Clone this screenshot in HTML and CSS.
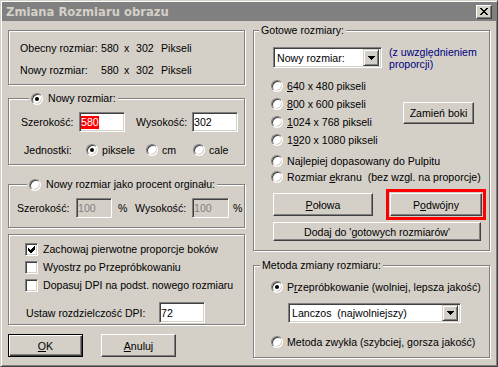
FILE: index.html
```html
<!DOCTYPE html>
<html lang="pl">
<head>
  <meta charset="UTF-8" />
  <meta name="viewport" content="width=device-width, initial-scale=1" />
  <title>Zmiana Rozmiaru obrazu</title>
  <link rel="stylesheet" href="styles.css">
</head>
<body>
  <div class="window">
    <div class="titlebar">
      <span class="title">Zmiana Rozmiaru obrazu</span>
      <button class="close" aria-label="Zamknij">
        <svg width="8" height="7" viewBox="0 0 8 7" shape-rendering="crispEdges"><path d="M0 0h2v1H0zM6 0h2v1H6zM1 1h2v1H1zM5 1h2v1H5zM2 2h4v1H2zM3 3h2v1H3zM2 4h4v1H2zM1 5h2v1H1zM5 5h2v1H5zM0 6h2v1H0zM6 6h2v1H6z" fill="#000"/></svg>
      </button>
    </div>

    <div class="dialog">
      <!-- left column -->
      <div class="col">
        <fieldset class="group info">
          <div class="info-grid">
            <span>Obecny rozmiar:</span><span>580</span><span>x</span><span>302</span><span>Pikseli</span>
            <span>Nowy rozmiar:</span><span>580</span><span>x</span><span>302</span><span>Pikseli</span>
          </div>
        </fieldset>

        <fieldset class="group new-size">
          <legend class="legend-new"><span class="radio checked"></span>Nowy rozmiar:</legend>
          <div class="row">
            <span class="lbl w58">Szerokość:</span>
            <span class="field w46"><span class="sel">580</span></span>
            <span class="lbl w56 ml11">Wysokość:</span>
            <span class="field w46">302</span>
          </div>
          <div class="row units">
            <span class="lbl w62">Jednostki:</span>
            <span class="opt w60"><span class="radio checked"></span>piksele</span>
            <span class="opt w47"><span class="radio"></span>cm</span>
            <span class="opt"><span class="radio"></span>cale</span>
          </div>
        </fieldset>

        <fieldset class="group percent">
          <legend class="legend-pct"><span class="radio"></span>Nowy rozmiar jako procent orginału:</legend>
          <div class="row">
            <span class="lbl w59">Szerokość:</span>
            <span class="field disabled w36">100</span>
            <span class="lbl pct">%</span>
            <span class="lbl w57">Wysokość:</span>
            <span class="field disabled w37">100</span>
            <span class="lbl pct2">%</span>
          </div>
        </fieldset>

        <fieldset class="group options">
          <div class="opt crow"><span class="check"><svg width="7" height="7" viewBox="0 0 7 7" shape-rendering="crispEdges"><path d="M0 2v3l2 2h1l4-4V0H6L2 4z" fill="#000"/></svg></span>Zachowaj pierwotne proporcje boków</div>
          <div class="opt crow"><span class="check"></span>Wyostrz po Przepróbkowaniu</div>
          <div class="opt crow"><span class="check"></span>Dopasuj DPI na podst. nowego rozmiaru</div>
          <div class="row dpi">
            <span class="lbl w133">Ustaw rozdzielczość DPI:</span>
            <span class="field w46">72</span>
          </div>
        </fieldset>

        <div class="actions">
          <button class="btn default"><u>O</u>K</button>
          <button class="btn"><u>A</u>nuluj</button>
        </div>
      </div>

      <!-- right column -->
      <div class="col">
        <fieldset class="group presets">
          <legend class="legend-plain">Gotowe rozmiary:</legend>
          <div class="presets-body">
            <div class="combo-row">
              <div class="combo w109">
                <span>Nowy rozmiar:</span>
                <span class="arrow"><svg width="7" height="4" viewBox="0 0 7 4" shape-rendering="crispEdges"><path d="M0 0h7v1H0zM1 1h5v1H1zM2 2h3v1H2zM3 3h1v1H3z" fill="#000"/></svg></span>
              </div>
              <div class="hint">(z uwzględnieniem<br>proporcji)</div>
            </div>

            <div class="size-block">
              <div class="size-list">
                <div class="opt srow"><span class="radio"></span><span><u>6</u>40 x 480 pikseli</span></div>
                <div class="opt srow"><span class="radio"></span><span><u>8</u>00 x 600 pikseli</span></div>
                <div class="opt srow"><span class="radio"></span><span><u>1</u>024 x 768 pikseli</span></div>
                <div class="opt srow"><span class="radio"></span><span>1<u>9</u>20 x 1080 pikseli</span></div>
              </div>
              <button class="btn swap">Zamień boki</button>
            </div>

            <div class="fit-list">
              <div class="opt frow"><span class="radio"></span>Najlepiej dopasowany do Pulpitu</div>
              <div class="opt frow"><span class="radio"></span><span>Rozmiar <u>e</u>kranu&nbsp; (bez wzgl. na proporcje)</span></div>
            </div>

            <div class="half-row">
              <button class="btn half"><u>P</u>ołowa</button>
              <button class="btn double marked">P<u>o</u>dwójny</button>
            </div>
            <button class="btn add">Dodaj do 'gotowych rozmiarów'</button>
          </div>
        </fieldset>

        <fieldset class="group method">
          <legend class="legend-plain method-legend">Metoda zmiany rozmiaru:</legend>
          <div class="method-body">
            <div class="opt frow"><span class="radio checked"></span><span>P<u>r</u>zepróbkowanie (wolniej, lepsza jakość)</span></div>
            <div class="combo w173 filter">
              <span>Lanczos&nbsp; (najwolniejszy)</span>
              <span class="arrow"><svg width="7" height="4" viewBox="0 0 7 4" shape-rendering="crispEdges"><path d="M0 0h7v1H0zM1 1h5v1H1zM2 2h3v1H2zM3 3h1v1H3z" fill="#000"/></svg></span>
            </div>
            <div class="opt frow plain"><span class="radio"></span>Metoda zwykła (szybciej, gorsza jakość)</div>
          </div>
        </fieldset>
      </div>
    </div>
  </div>
</body>
</html>
```

FILE: styles.css
```css
body {
  margin: 0;
  background: #d4d0c8;
  font-family: "Liberation Sans", Arial, sans-serif;
  font-size: 10.6px;
  color: #000;
}
button {
  font: inherit;
  color: #000;
  padding: 0;
  cursor: default;
}

/* window frame */
.window {
  width: 498px;
  height: 367px;
  box-sizing: border-box;
  padding: 1px;
  border: 1px solid;
  border-color: #d4d0c8 #404040 #404040 #d4d0c8;
  box-shadow: inset 1px 1px #fff, inset -1px -1px #808080;
  background: #d4d0c8;
}
.titlebar {
  height: 19px;
  background: #808080;
  display: flex;
  align-items: center;
  padding-left: 4px;
}
.title {
  font-family: "DejaVu Sans", Verdana, sans-serif;
  font-weight: bold;
  font-size: 11.6px;
  color: #d4d0c8;
}
.close {
  margin-left: auto;
  margin-right: 4px;
  width: 16px;
  height: 14px;
  box-sizing: border-box;
  background: #d4d0c8;
  border: 1px solid;
  border-color: #fff #404040 #404040 #fff;
  box-shadow: inset -1px -1px #808080;
  display: flex;
  align-items: center;
  justify-content: center;
}
.close svg {
  display: block;
}

.dialog {
  display: flex;
  gap: 8px;
  padding-left: 6px;
}
.col {
  width: 237px;
  display: flex;
  flex-direction: column;
}

/* etched group box */
.group {
  margin: 0;
  padding: 0;
  min-width: 0;
  border: 1px solid #808080;
  box-shadow: inset 1px 1px #fff, 1px 1px #fff;
}
.group legend {
  display: flex;
  align-items: center;
  gap: 5px;
  height: 13px;
  line-height: 13px;
  padding: 0 2px;
  background: #d4d0c8;
}
.legend-new { margin-left: 8px; }
.legend-pct { margin-left: 10px; }
.legend-plain { margin-left: 5px; }
.method-legend { margin-left: 6px; }

.info {
  margin-top: 9px;
  padding: 6px 0 3px 11px;
}
.info-grid {
  display: grid;
  grid-template-columns: 81px 23px 12px 25px auto;
  grid-auto-rows: 22px;
  align-items: center;
}

.new-size {
  margin-top: 7px;
  padding: 6px 0 3px 12px;
}
.new-size .units {
  margin-top: 6px;
  padding-left: 3px;
}
.percent {
  margin-top: 13px;
  padding: 6px 0 8px 8px;
}
.options {
  margin-top: 6px;
  padding: 5px 0 1px 16px;
}

.row {
  display: flex;
  align-items: center;
  height: 22px;
}
.lbl { flex: none; }
.w58 { width: 58px; }
.w56 { width: 56px; }
.w57 { width: 57px; }
.w59 { width: 59px; }
.w62 { width: 62px; }
.w133 { width: 133px; }
.ml11 { margin-left: 11px; }
.pct { width: 17px; margin-left: 6px; }
.pct2 { margin-left: 4px; }

/* sunken edit field */
.field {
  box-sizing: border-box;
  height: 20px;
  background: #fff;
  border: 1px solid;
  border-color: #808080 #fff #fff #808080;
  box-shadow: inset 1px 1px #404040, inset -1px -1px #d4d0c8;
  padding-left: 1px;
  display: flex;
  align-items: center;
  flex: none;
}
.field.disabled {
  background: #d4d0c8;
  color: #808080;
}
.w46 { width: 46px; }
.w36 { width: 36px; }
.w37 { width: 37px; }
.sel {
  background: #f00;
  color: #fff;
  line-height: 13px;
}

/* radio and check */
.opt {
  display: flex;
  align-items: center;
  gap: 4px;
  flex: none;
}
.w60 { width: 60px; }
.w47 { width: 47px; }
.radio {
  position: relative;
  flex: none;
  width: 12px;
  height: 12px;
  box-sizing: border-box;
  border-radius: 50%;
  background: #fff;
  border: 1px solid;
  border-color: #808080 #fff #fff #808080;
  box-shadow: inset 1px 1px #404040, inset -1px -1px #d4d0c8;
}
.radio.checked::after {
  content: "";
  position: absolute;
  left: 3px;
  top: 3px;
  width: 4px;
  height: 4px;
  border-radius: 50%;
  background: #000;
}
.check {
  flex: none;
  width: 13px;
  height: 13px;
  box-sizing: border-box;
  background: #fff;
  border: 1px solid;
  border-color: #808080 #fff #fff #808080;
  box-shadow: inset 1px 1px #404040, inset -1px -1px #d4d0c8;
  padding: 2px;
}
.check svg { display: block; }
.crow {
  height: 18px;
  gap: 5px;
}
.dpi {
  margin-top: 8px;
  height: 21px;
  padding-left: 1px;
}
.dpi .field { height: 21px; }

/* raised buttons */
.btn {
  box-sizing: border-box;
  background: #d4d0c8;
  border: 1px solid;
  border-color: #fff #404040 #404040 #fff;
  box-shadow: inset -1px -1px #808080;
  display: flex;
  align-items: center;
  justify-content: center;
}
.btn.default {
  border-color: #000;
  box-shadow: inset 1px 1px #fff, inset -1px -1px #404040, inset -2px -2px #808080;
}
.actions {
  display: flex;
  gap: 18px;
  margin-top: 9px;
}
.actions .btn {
  width: 75px;
  height: 23px;
}

/* right column */
.presets {
  margin-top: 3px;
}
.presets-body {
  padding: 9px 0 9px 17px;
}
.combo-row {
  display: flex;
  align-items: flex-start;
  gap: 7px;
}
.combo {
  box-sizing: border-box;
  height: 21px;
  background: #fff;
  border: 1px solid;
  border-color: #808080 #fff #fff #808080;
  box-shadow: inset 1px 1px #404040, inset -1px -1px #d4d0c8;
  display: flex;
  align-items: center;
  padding: 2px 2px 2px 3px;
  flex: none;
}
.combo .arrow {
  margin-left: auto;
  width: 16px;
  height: 17px;
  box-sizing: border-box;
  background: #d4d0c8;
  border: 1px solid;
  border-color: #d4d0c8 #404040 #404040 #d4d0c8;
  box-shadow: inset 1px 1px #fff, inset -1px -1px #808080;
  display: flex;
  align-items: center;
  justify-content: center;
}
.combo .arrow svg { display: block; }
.combo-row .combo {
  margin: 1px 0 0 2px;
}
.w109 { width: 109px; }
.w173 { width: 173px; }
.hint {
  color: #000080;
  line-height: 12px;
}

.size-block {
  display: flex;
  align-items: center;
  margin-top: 7px;
}
.size-list {
  width: 132px;
}
.srow { height: 18px; }
.swap {
  width: 71px;
  height: 22px;
}
.fit-list {
  margin-top: 4px;
}
.frow { height: 16px; }

.half-row {
  display: flex;
  gap: 17px;
  margin: 8px 0 0 2px;
}
.half {
  width: 100px;
  height: 23px;
}
.double {
  width: 92px;
  height: 23px;
}
.marked {
  outline: 3px solid #f00;
  outline-offset: 1px;
}
.add {
  width: 208px;
  height: 19px;
  margin: 6px 0 0 2px;
}

.method {
  margin-top: 8px;
}
.method-body {
  padding: 7px 0 7px 17px;
}
.filter {
  margin: 8px 0 0 17px;
  height: 20px;
}
.filter .arrow { height: 16px; }
.method .plain {
  margin-top: 11px;
}
```
